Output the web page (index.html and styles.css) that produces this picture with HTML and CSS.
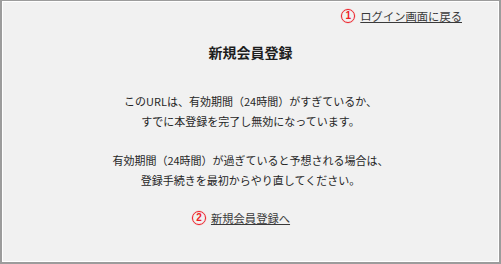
FILE: index.html
```html
<!DOCTYPE html>
<html lang="ja">
<head>
<meta charset="utf-8">
<link rel="stylesheet" href="styles.css">
</head>
<body>
<div class="frame">
  <div class="top">
    <span class="num">1</span><a class="link" href="#">ログイン画面に戻る</a>
  </div>
  <h1 class="title">新規会員登録</h1>
  <p class="msg">このURLは、有効期間（24時間）がすぎているか、<br>すでに本登録を完了し無効になっています。</p>
  <p class="msg">有効期間（24時間）が過ぎていると予想される場合は、<br>登録手続きを最初からやり直してください。</p>
  <div class="bottom">
    <span class="num">2</span><a class="link" href="#">新規会員登録へ</a>
  </div>
</div>
</body>
</html>
```
FILE: styles.css
```css
html, body {
  margin: 0;
  padding: 0;
  background: #f2f2f2;
}
.frame {
  box-sizing: border-box;
  width: 501px;
  height: 264px;
  border: 1px solid #9c9c9c;
  border-width: 1px 2px 2px 2px;
  box-shadow: inset 0 0 0 1px #ffffff;
  background: #f1f1f1;
  font-family: "Noto Sans CJK JP", "Noto Sans", sans-serif;
  font-size: 11px;
  color: #262626;
  display: flex;
  flex-direction: column;
  align-items: center;
}
.top {
  align-self: flex-end;
  margin-right: 37px;
  margin-top: 5px;
  height: 20px;
  position: relative;
  font-size: 11.3px;
}
.bottom {
  margin-top: 18px;
  height: 20px;
  position: relative;
  font-size: 11.3px;
}
.num {
  position: absolute;
  left: -19px;
  top: 3px;
  box-sizing: border-box;
  width: 14px;
  height: 14px;
  border: 1.5px solid #ee1c25;
  border-radius: 50%;
  box-shadow: 0 0 0 0.5px rgba(238, 28, 37, 0.25);
  color: #ee1c25;
  font-family: "Liberation Sans", sans-serif;
  font-size: 10px;
  font-weight: bold;
  line-height: 11px;
  text-align: center;
}
.link {
  color: #3a3a3a;
  text-decoration: underline;
  line-height: 20px;
}
.title {
  margin: 16px 0 0 0;
  font-size: 14px;
  font-weight: bold;
  color: #1e1e1e;
  line-height: 20px;
}
.msg {
  margin: 29px 0 0 0;
  text-align: center;
  line-height: 20px;
}
.msg + .msg {
  margin-top: 19px;
}
```
